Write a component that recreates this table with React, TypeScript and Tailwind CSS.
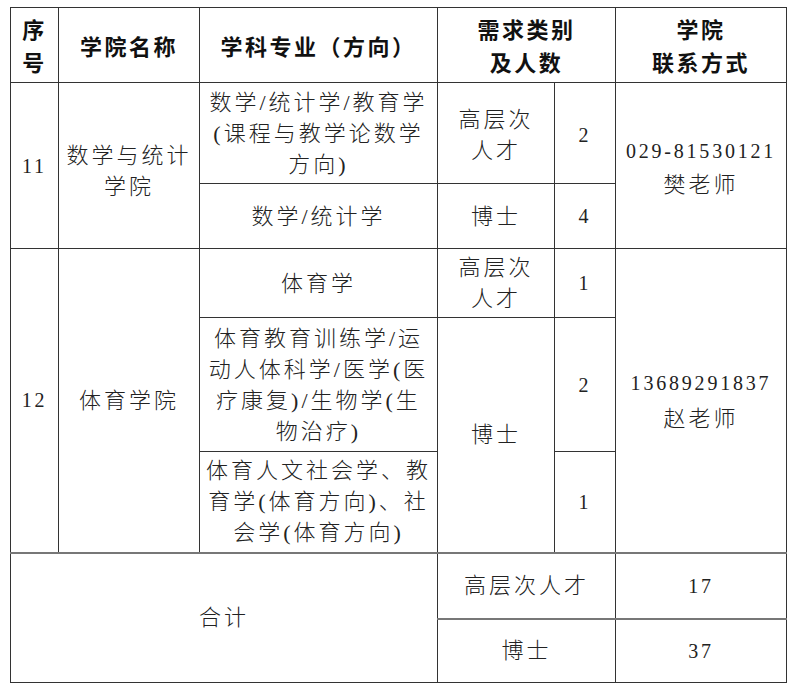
import React from "react";

const cell =
  "border border-[#333] text-center align-middle p-0 overflow-hidden";
const body =
  "font-['Liberation_Serif','Noto_Sans_CJK_SC',serif] font-light text-[22px] leading-[31px] tracking-[3px] text-[#222] whitespace-nowrap";
const num =
  "font-['Liberation_Serif',serif] text-[20px] tracking-[2.8px] text-[#222] whitespace-nowrap";
const head =
  "font-['Noto_Sans_CJK_SC',sans-serif] font-bold text-[22px] leading-[33px] tracking-[2.5px] text-[#111]";

export default function App() {
  return (
    <div className="min-h-[692px] w-[799px] bg-white pl-[10px] pt-[7px]">
      <table className="table-fixed border-collapse w-[776px] border border-[#222]">
        <colgroup>
          <col className="w-[48px]" />
          <col className="w-[141px]" />
          <col className="w-[238px]" />
          <col className="w-[117px]" />
          <col className="w-[61px]" />
          <col className="w-[171px]" />
        </colgroup>
        <tbody>
          <tr className="h-[75px]">
            <td className={`${cell} ${head}`}>
              序<br />号
            </td>
            <td className={`${cell} ${head}`}>学院名称</td>
            <td className={`${cell} ${head}`}>学科专业（方向）</td>
            <td colSpan={2} className={`${cell} ${head}`}>
              需求类别
              <br />
              及人数
            </td>
            <td className={`${cell} ${head}`}>
              学院
              <br />
              联系方式
            </td>
          </tr>

          <tr className="h-[101px]">
            <td rowSpan={2} className={`${cell} ${num}`}>
              11
            </td>
            <td rowSpan={2} className={`${cell} ${body} pt-[10px]`}>
              数学与统计
              <br />
              学院
            </td>
            <td className={`${cell} ${body}`}>
              数学/统计学/教育学
              <br />
              (课程与教学论数学
              <br />
              方向)
            </td>
            <td className={`${cell} ${body} leading-[30px] pt-[4px]`}>
              高层次
              <br />
              人才
            </td>
            <td className={`${cell} ${num} pt-[4px]`}>2</td>
            <td rowSpan={2} className={`${cell} pt-[4px]`}>
              <div className={`${num} leading-[34px]`}>029-81530121</div>
              <div className={`${body} leading-[34px]`}>樊老师</div>
            </td>
          </tr>

          <tr className="h-[65px]">
            <td className={`${cell} ${body}`}>数学/统计学</td>
            <td className={`${cell} ${body}`}>博士</td>
            <td className={`${cell} ${num}`}>4</td>
          </tr>

          <tr className="h-[69px]">
            <td rowSpan={3} className={`${cell} ${num}`}>
              12
            </td>
            <td rowSpan={3} className={`${cell} ${body}`}>
              体育学院
            </td>
            <td className={`${cell} ${body}`}>体育学</td>
            <td className={`${cell} ${body} leading-[30px]`}>
              高层次
              <br />
              人才
            </td>
            <td className={`${cell} ${num}`}>1</td>
            <td rowSpan={3} className={`${cell} pt-[2px]`}>
              <div className={`${num} leading-[35px]`}>13689291837</div>
              <div className={`${body} leading-[35px]`}>赵老师</div>
            </td>
          </tr>

          <tr className="h-[134px]">
            <td className={`${cell} ${body}`}>
              体育教育训练学/运
              <br />
              动人体科学/医学(医
              <br />
              疗康复)/生物学(生
              <br />
              物治疗)
            </td>
            <td rowSpan={2} className={`${cell} ${body}`}>
              博士
            </td>
            <td className={`${cell} ${num}`}>2</td>
          </tr>

          <tr className="h-[101px]">
            <td className={`${cell} ${body} leading-[30px]`}>
              体育人文社会学、教
              <br />
              育学(体育方向)、社
              <br />
              会学(体育方向)
            </td>
            <td className={`${cell} ${num}`}>1</td>
          </tr>

          <tr className="h-[66px]">
            <td
              colSpan={3}
              rowSpan={2}
              className={`${cell} ${body} border-t-2 border-t-[#777]`}
            >
              合计
            </td>
            <td
              colSpan={2}
              className={`${cell} ${body} border-t-2 border-t-[#777]`}
            >
              高层次人才
            </td>
            <td className={`${cell} ${num} border-t-2 border-t-[#777]`}>17</td>
          </tr>

          <tr className="h-[64px]">
            <td
              colSpan={2}
              className={`${cell} ${body} border-t-2 border-t-[#777]`}
            >
              博士
            </td>
            <td className={`${cell} ${num} border-t-2 border-t-[#777]`}>37</td>
          </tr>
        </tbody>
      </table>
    </div>
  );
}
